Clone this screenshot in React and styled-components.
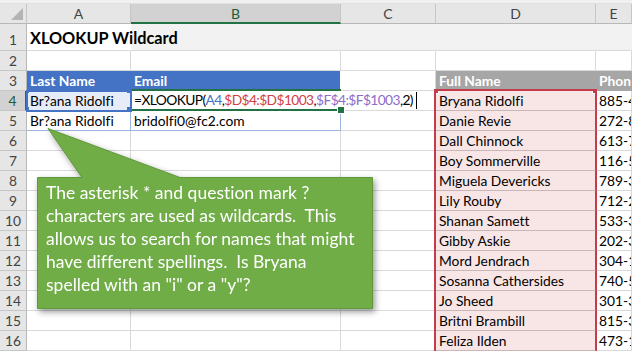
import styled, { createGlobalStyle, css } from 'styled-components'

const GlobalStyle = createGlobalStyle`
  *, *::before, *::after { box-sizing: border-box; }
  html, body { margin: 0; padding: 0; background: #fff; }
  body {
    font-family: Lato, "Liberation Sans", sans-serif;
    font-variant-ligatures: none;
    overflow: hidden;
  }
`

const GRID = '#d9d9d9'
const GREEN = '#217346'
const BLUE = '#4472c4'
const RED = '#c43c4a'
const PINK = '#f8e6e6'
const PINK_LINE = '#c9b6b6'
const TABLE_LINE = '#9db6e0'

const Page = styled.div`
  position: relative;
  width: 632px;
  height: 352px;
  overflow: hidden;
  background: #fff;
`

const TopStrip = styled.div`
  height: 4px;
  background: #f1f1f1;
  border-bottom: 1px solid #e0e0e0;
`

const Sheet = styled.div`
  display: grid;
  grid-template-columns: 27px 104px 210px 95px 160px 36px;
  grid-template-rows: 20px 27px repeat(15, 20px);
  font-size: 13.8px;
  color: #000;
`

const Corner = styled.div`
  display: flex;
  justify-content: flex-end;
  align-items: flex-end;
  padding: 0 3px 3px 0;
  background: #e6e6e6;
  border-right: 1px solid #c6c6c6;
  border-bottom: 1px solid #b8b8b8;

  &::after {
    content: '';
    width: 0;
    height: 0;
    border-left: 12px solid transparent;
    border-bottom: 12px solid #b4b4b4;
  }
`

const ColHead = styled.div`
  display: flex;
  align-items: center;
  justify-content: center;
  background: ${p => (p.$active ? '#d2d2d2' : '#e6e6e6')};
  color: ${p => (p.$active ? '#1d5a36' : '#444')};
  border-right: 1px solid #c6c6c6;
  border-bottom: ${p => (p.$active ? `2px solid ${GREEN}` : '1px solid #b8b8b8')};
  font-size: 14px;
`

const RowHead = styled.div`
  display: flex;
  align-items: center;
  justify-content: center;
  background: ${p => (p.$active ? '#d2d2d2' : '#e6e6e6')};
  color: ${p => (p.$active ? '#1d5a36' : '#444')};
  border-right: ${p => (p.$active ? `2px solid ${GREEN}` : '1px solid #b8b8b8')};
  border-bottom: 1px solid #c6c6c6;
  padding-top: ${p => (p.$tall ? '4px' : '0')};
`

// little square grips on the corners of a selection
const grip = color => css`
  content: '';
  position: absolute;
  width: 6px;
  height: 6px;
  background: ${color};
`

const refSelection = css`
  position: relative;
  z-index: 3;
  outline: 2px solid ${BLUE};
  outline-offset: -1px;

  &::before {
    ${grip(BLUE)};
    left: -4px;
    top: -4px;
    box-shadow: 104px 0 0 ${BLUE}, 0 20px 0 ${BLUE}, 104px 20px 0 ${BLUE};
  }
`

const activeSelection = css`
  position: relative;
  z-index: 2;
  border-bottom: 2px solid ${GREEN};
  box-shadow: 0 -2px 0 ${GREEN};

  &::after {
    ${grip(GREEN)};
    right: -4px;
    bottom: -4px;
    outline: 1px solid #fff;
  }
`

const rangeSelection = first => css`
  position: relative;
  z-index: 1;
  border-right: 1px solid ${RED};
  box-shadow: -2px 0 0 ${RED}, 1px 0 0 ${RED}
    ${first ? `, 0 -2px 0 ${RED}, -2px -2px 0 ${RED}, 1px -2px 0 ${RED}` : ''};

  ${first && css`
    &::before {
      ${grip(RED)};
      left: -4px;
      top: -4px;
      outline: 1px solid #fff;
    }
    &::after {
      ${grip(RED)};
      right: -4px;
      top: -4px;
      outline: 1px solid #fff;
    }
  `}
`

const Cell = styled.div`
  display: flex;
  align-items: center;
  padding: 0 3px;
  white-space: nowrap;
  overflow: ${p => (p.$over ? 'visible' : 'hidden')};
  background: ${p => p.$fill || '#fff'};
  color: ${p => p.$color || '#000'};
  font-weight: ${p => (p.$bold ? 700 : 400)};
  border-right: 1px solid ${p => p.$edgeR || p.$edge || GRID};
  border-bottom: 1px solid ${p => p.$edgeB || p.$edge || GRID};

  ${p => p.$over && css`
    position: relative;
    z-index: 1;
  `}
  ${p => p.$sel === 'ref' && refSelection}
  ${p => p.$sel === 'active' && activeSelection}
  ${p => p.$sel === 'range' && rangeSelection(p.$first)}
`

const TitleCell = styled(Cell)`
  align-items: flex-end;
  padding-bottom: 4px;
`

const Title = styled.span`
  font-size: 16.3px;
  font-weight: 700;
  line-height: 1;
`

const FormulaText = styled.span`
  letter-spacing: -0.6px;
`

const Ref = styled.span`
  color: ${p => p.$c};
`

const Caret = styled.span`
  display: inline-block;
  width: 1px;
  height: 17px;
  margin-left: 3px;
  background: #000;
  vertical-align: -4px;
`

const Callout = styled.div`
  position: absolute;
  left: 37px;
  top: 128px;
  width: 336px;
  height: 181px;
  z-index: 5;
  filter: drop-shadow(2px 3px 3px rgba(0, 0, 0, 0.4));

  svg {
    position: absolute;
    left: 0;
    top: 0;
  }
`

const CalloutText = styled.div`
  position: relative;
  margin-top: 49px;
  padding: 4px 0 0 9px;
  color: #fff;
  font-size: 17.5px;
  line-height: 23px;
  white-space: pre;
`

const people = [
  ['Bryana Ridolfi', '885-462-1038'],
  ['Danie Revie', '272-814-5520'],
  ['Dall Chinnock', '613-790-2241'],
  ['Boy Sommerville', '116-583-9012'],
  ['Miguela Devericks', '789-317-6604'],
  ['Lily Rouby', '712-240-8813'],
  ['Shanan Samett', '533-369-1175'],
  ['Gibby Askie', '202-341-7718'],
  ['Mord Jendrach', '304-145-3320'],
  ['Sosanna Cathersides', '740-521-4497'],
  ['Jo Sheed', '301-330-9086'],
  ['Britni Brambill', '815-337-2264'],
  ['Feliza Ilden', '473-120-6651'],
]

const Formula = () => (
  <FormulaText>
    {'=XLOOKUP('}
    <Ref $c={BLUE}>A4</Ref>
    {','}
    <Ref $c="#d2403f">$D$4:$D$1003</Ref>
    {','}
    <Ref $c="#8e6cc9">$F$4:$F$1003</Ref>
    {',2)'}
    <Caret />
  </FormulaText>
)

const GRAY_ROW = '#f2f2f2'

const App = () => {
  const rows = []
  for (let r = 1; r <= 16; r++) {
    const person = r >= 4 ? people[r - 4] : null
    let a = <Cell key={`a${r}`} />
    let b = <Cell key={`b${r}`} />
    let c = <Cell key={`c${r}`} $edgeR={person ? RED : GRID} />
    let d = <Cell key={`d${r}`} />
    let e = <Cell key={`e${r}`} />

    if (r === 1) {
      a = (
        <TitleCell key="a1" $over $edgeR="#fff">
          <Title>XLOOKUP Wildcard</Title>
        </TitleCell>
      )
      b = <Cell key="b1" $fill={GRAY_ROW} $edgeR={GRAY_ROW} />
      c = <Cell key="c1" $fill={GRAY_ROW} $edgeR={GRAY_ROW} />
      d = <Cell key="d1" $fill={GRAY_ROW} $edgeR={GRAY_ROW} />
      e = <Cell key="e1" $fill={GRAY_ROW} $edgeR={GRAY_ROW} />
    } else if (r === 3) {
      a = <Cell key="a3" $fill={BLUE} $edge={BLUE} $color="#fff" $bold>Last Name</Cell>
      b = <Cell key="b3" $fill={BLUE} $edgeR="#fff" $edgeB={BLUE} $color="#fff" $bold>Email</Cell>
      d = <Cell key="d3" $fill="#a6a6a6" $edge="#a6a6a6" $color="#fff" $bold>Full Name</Cell>
      e = <Cell key="e3" $fill="#a6a6a6" $edge="#a6a6a6" $color="#fff" $bold>Phone</Cell>
    } else if (r === 4) {
      a = <Cell key="a4" $sel="ref" $fill="#e6edf8">Br?ana Ridolfi</Cell>
      b = (
        <Cell key="b4" $over $sel="active" $edgeR="#fff">
          <Formula />
        </Cell>
      )
    } else if (r === 5) {
      a = <Cell key="a5" $edge={TABLE_LINE}>Br?ana Ridolfi</Cell>
      b = <Cell key="b5" $edge={TABLE_LINE}>bridolfi0@fc2.com</Cell>
    }

    if (person) {
      d = (
        <Cell key={`d${r}`} $sel="range" $first={r === 4} $fill={PINK} $edgeB={PINK_LINE}>
          {person[0]}
        </Cell>
      )
      e = <Cell key={`e${r}`}>{person[1]}</Cell>
    }

    rows.push(
      <RowHead key={`h${r}`} $active={r === 4} $tall={r === 1}>{r}</RowHead>,
      a, b, c, d, e
    )
  }

  return (
    <Page>
      <GlobalStyle />
      <TopStrip />
      <Sheet>
        <Corner />
        <ColHead>A</ColHead>
        <ColHead $active>B</ColHead>
        <ColHead>C</ColHead>
        <ColHead>D</ColHead>
        <ColHead>E</ColHead>
        {rows}
      </Sheet>

      <Callout>
        <svg width="336" height="181" viewBox="0 0 336 181">
          <path
            d="M45 49.5 L11 0.5 L143 49.5 L335.5 49.5 L335.5 180.5 L0.5 180.5 L0.5 49.5 Z"
            fill="#70ad47"
            stroke="#5e9a3a"
            strokeWidth="1"
          />
        </svg>
        <CalloutText>
          {'The asterisk * and question mark ?\n'}
          {'characters are used as wildcards.  This\n'}
          {'allows us to search for names that might\n'}
          {'have different spellings.  Is Bryana\n'}
          {'spelled with an "i" or a "y"?'}
        </CalloutText>
      </Callout>
    </Page>
  )
}

export default App
